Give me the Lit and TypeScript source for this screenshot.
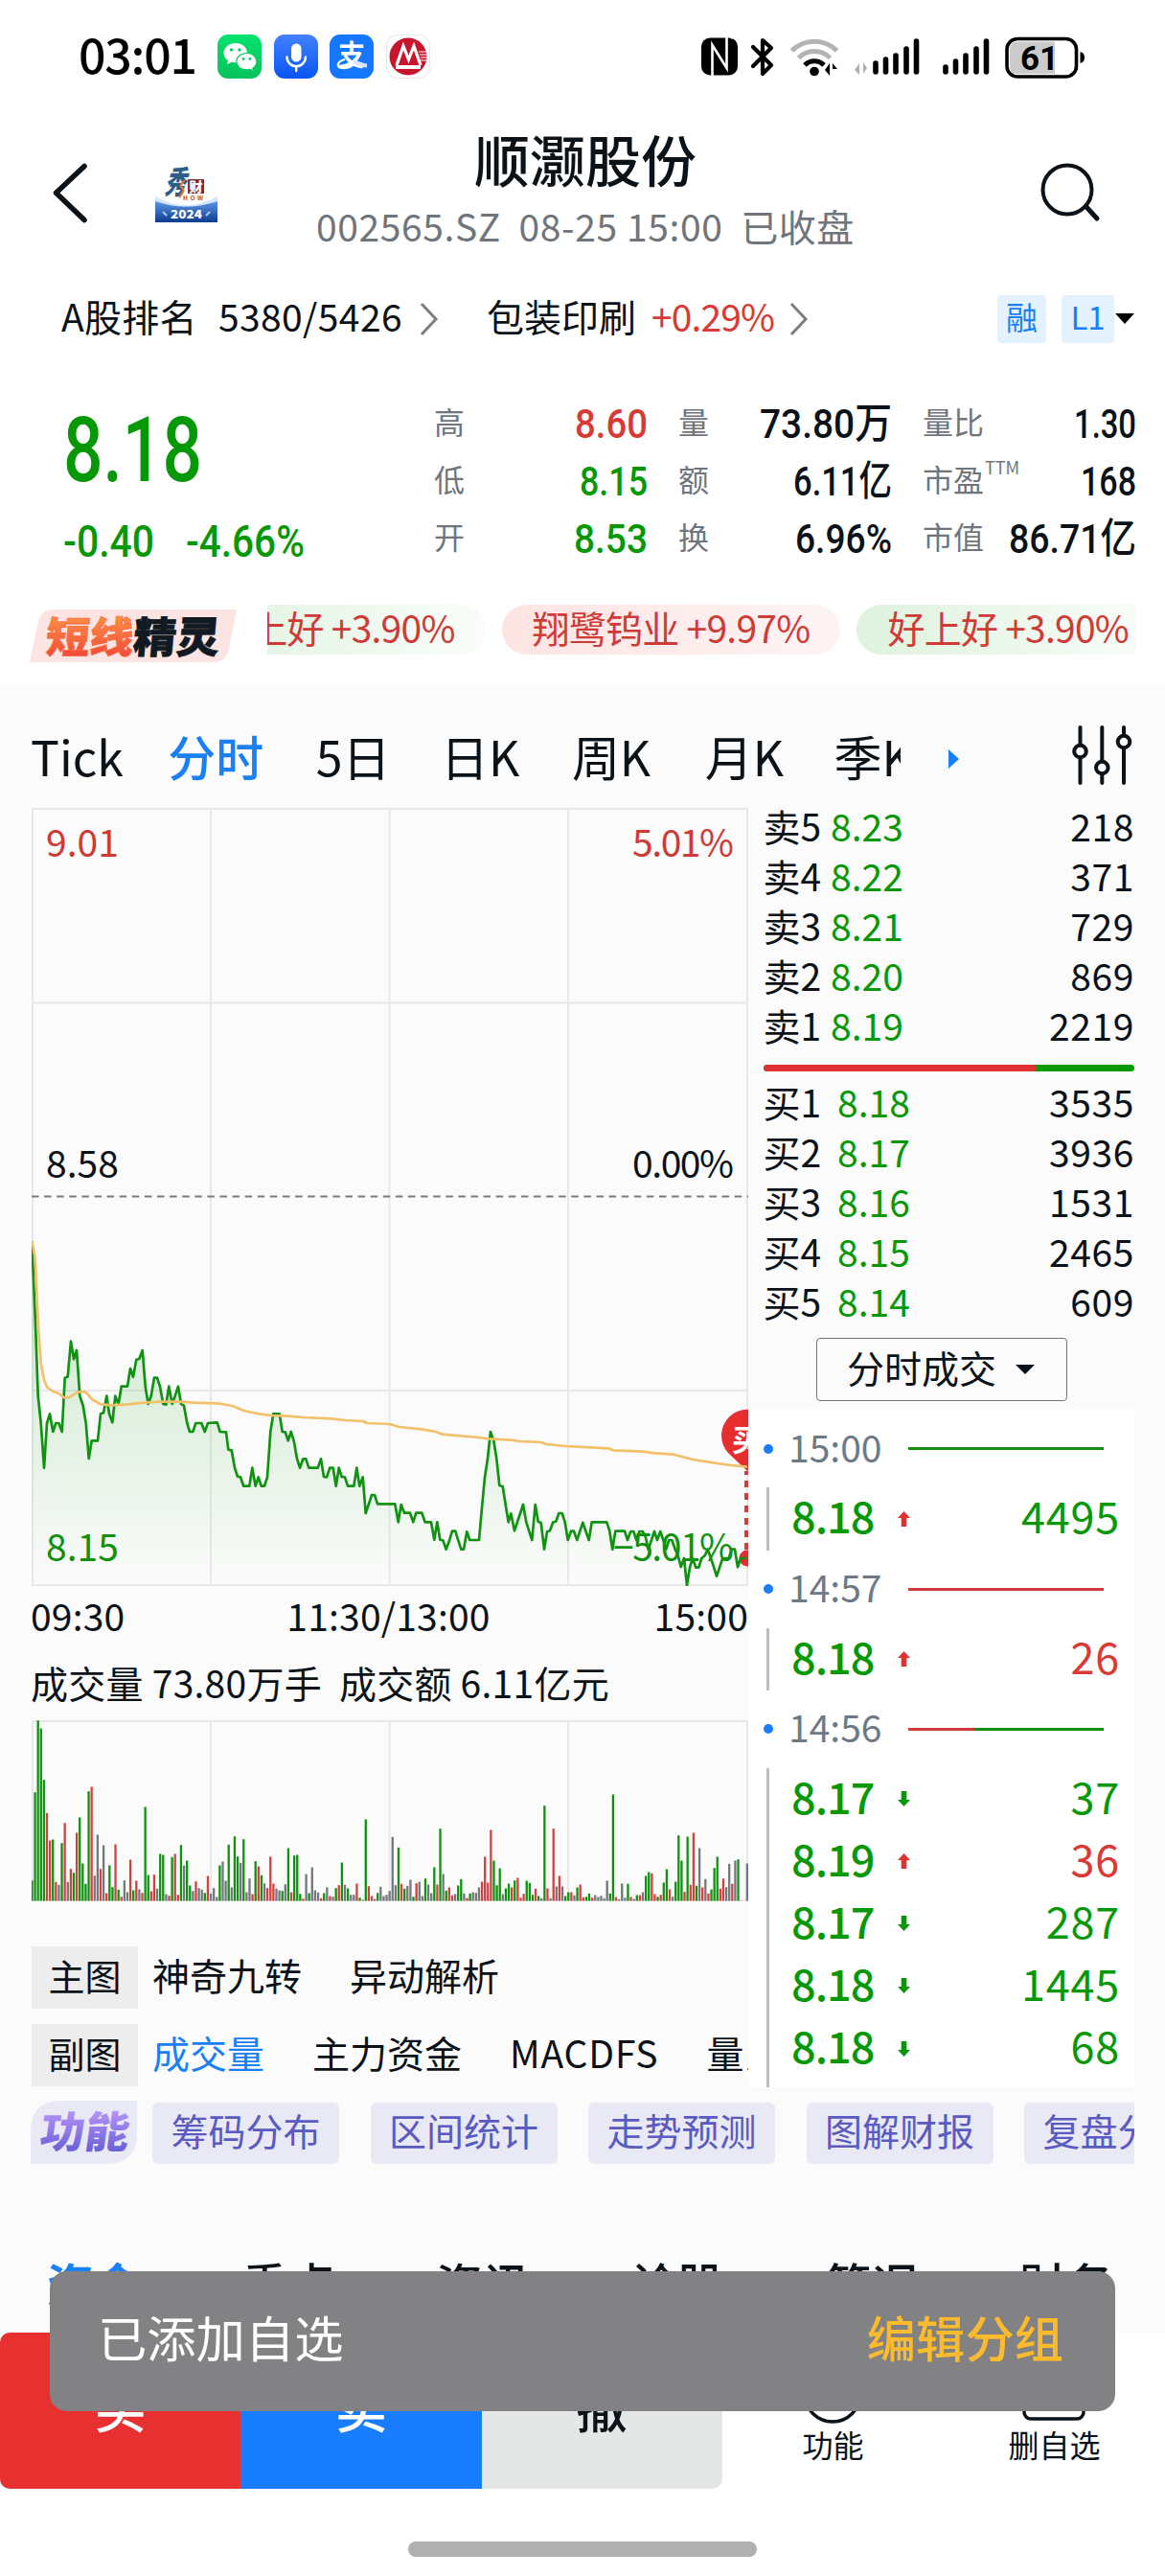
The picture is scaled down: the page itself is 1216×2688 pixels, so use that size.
import { LitElement, html, svg, css } from "lit";
import { customElement } from "lit/decorators.js";
import { classMap } from "lit/directives/class-map.js";

/* ---------- data ---------- */

const PRICE =
  "100,165 110,400 119,650 128,735 138,875 147,735 156,706 166,762 175,735 184,735 194,762 203,593 212,590 222,479 231,535 240,507 250,650 260,680 269,735 278,846 287,790 306,790 315,706 324,703 334,650 342,706 352,733 361,650 371,675 380,620 399,620 408,564 417,590 427,536 436,534 446,507 455,620 464,675 473,650 483,593 492,593 501,620 511,675 520,677 529,620 539,675 548,650 558,620 567,675 576,680 586,735 594,762 604,762 613,735 631,735 641,762 651,735 680,733 689,762 708,763 715,818 725,820 735,875 744,902 753,904 763,932 781,932 790,875 800,932 809,904 818,932 828,932 837,904 847,762 856,706 875,706 884,762 893,763 902,790 911,762 920,790 930,846 939,875 949,847 958,847 967,875 995,875 1005,847 1014,903 1023,904 1033,875 1043,875 1052,932 1061,875 1070,903 1080,904 1089,932 1108,932 1117,875 1126,932 1136,904 1145,1017 1155,988 1164,960 1173,960 1182,988 1237,988 1247,1045 1256,990 1266,1016 1284,1016 1294,1045 1303,1016 1321,1016 1331,1045 1350,1045 1360,1100 1369,1045 1378,1100 1387,1102 1397,1130 1408,1100 1416,1073 1426,1073 1435,1102 1444,1130 1452,1130 1462,1075 1471,1101 1500,1101 1508,1010 1518,905 1527,846 1536,762 1546,790 1555,846 1564,930 1574,933 1583,990 1592,1045 1600,1018 1611,1072 1620,1045 1638,990 1648,1045 1666,1101 1676,990 1685,1043 1694,1047 1704,1130 1713,1075 1722,1072 1732,1045 1741,1043 1750,1017 1760,1017 1769,1045 1778,1101 1788,1073 1797,1073 1807,1101 1825,1046 1844,1101 1853,1045 1900,1045 1909,1073 1918,1130 1927,1073 1956,1073 1965,1101 1975,1074 1984,1074 1993,1101 2002,1074 2012,1074 2021,1090 2030,1130 2040,1101 2049,1074 2058,1101 2068,1074 2077,1101 2086,1130 2095,1101 2104,1101 2114,1130 2123,1150 2132,1185 2142,1158 2151,1243 2160,1187 2169,1158 2179,1187 2188,1187 2197,1158 2207,1150 2216,1130 2226,1158 2235,1185 2244,1214 2254,1185 2263,1158 2282,1158 2291,1130 2301,1130 2310,1186 2319,1158 2340,1158";

const AVERAGE =
  "100,165 104,185 110,220 119,420 128,550 138,600 147,622 166,636 184,642 200,655 215,655 240,640 255,636 268,638 290,662 315,676 350,679 400,676 450,671 500,668 560,668 610,671 690,674 730,682 765,697 810,706 850,711 900,713 950,717 1040,721 1080,726 1138,729 1148,735 1220,738 1250,747 1320,754 1365,762 1385,770 1500,780 1530,784 1600,788 1630,792 1695,795 1710,801 1770,807 1905,814 1920,820 2010,824 2050,829 2110,833 2170,849 2220,857 2245,861 2290,867 2340,872";

/* One entry per minute: colour key and bar top. */
const VOLUME =
  "g726 g450 g225 g250 g411 r515 r601 g598 r731 k740 g609 r546 k731 r690 g702 r577 g529 g673 g737 g447 r433 k711 k583 r690 k616 r766 g679 g747 r613 g755 r777 k726 k763 r661 g757 r727 k754 r765 g496 g709 r760 r708 k752 g643 g646 k769 r774 g653 r643 r771 g615 k679 g664 g742 k759 r729 k750 k755 g765 r712 k767 k750 k778 g679 k667 k727 g614 k748 g588 g651 k671 g597 k763 k720 r769 g666 r682 g710 k735 r750 r652 r736 k752 k757 g759 k738 g625 r763 g648 g646 g768 r783 k706 g766 k685 k757 k764 r782 g766 k748 r775 k777 g750 r741 g670 k740 g751 k771 k771 r736 g780 r787 g535 r744 r775 k784 g765 k746 k775 k771 k759 k590 k741 g623 r737 g752 k743 k724 g777 r735 k730 k775 g720 k739 k766 g685 r739 g564 k706 g758 r748 r773 k769 g742 g722 k767 r781 g767 k763 k765 k748 r730 r652 r733 r568 g664 g741 g688 k769 g751 g736 r748 g726 r718 r780 r768 g727 g734 g771 r752 g775 k782 g492 r751 k782 r564 k745 r712 k745 g775 g763 r763 k773 g748 r739 r779 g777 g767 r780 k772 k778 k774 k782 k727 g767 g457 r778 k785 k736 k780 g737 r778 k784 g772 r772 k763 g712 g700 r704 r769 g777 r771 g733 g691 r754 k777 g730 g585 g664 r762 g589 r740 r577 g743 k625 r748 k722 r767 g754 g687 g652 r752 r720 k747 k674 r737 k664 g660 r789 k790 k673";

const COLORS: Record<string, string> = { g: "#0f920f", r: "#d63f3f", k: "#73787c" };

const toPoints = (s: string) =>
  s.split(" ").map((p) => {
    const [x, y] = p.split(",").map(Number);
    return [x / 3 - 33, y / 3 + 397] as [number, number];
  });
const join = (pts: [number, number][]) => pts.map(([x, y]) => `${x.toFixed(1)},${y.toFixed(1)}`).join(" ");
const pricePts = toPoints(PRICE);
const priceLine = join(pricePts);
const priceArea = `0.3,810.5 ${priceLine} 747,810.5`;
const averageLine = join(toPoints(AVERAGE));

/* Numeral text squeezed to an exact advance width; the box is one cap height tall. */
const fit = (text: string, width: number, size: number, cls = "") => html`
  <svg class="fit ${cls}" width=${width} height=${Math.round(size * 0.711)}>
    <text x="0" y=${Math.round(size * 0.711)} font-size=${size} textLength=${width} lengthAdjust="spacingAndGlyphs">${text}</text>
  </svg>`;

const tokens = css`
  :host {
    display: block;
    box-sizing: border-box;
    font-family: "Noto Sans CJK SC", "Noto Sans", sans-serif;
    color: #0b1218;
    font-size: 39px;
    white-space: nowrap;
  }
  * { box-sizing: border-box; }
  svg { display: block; flex: none; }
  .fit { overflow: visible; font-family: Roboto, "Noto Sans CJK SC", sans-serif; font-weight: 500; fill: currentColor; }
  .red { color: #d93a36; }
  .green { color: #079807; }
  .blue { color: #1a80f5; }
`;

/* ---------- status bar ---------- */

@customElement("status-bar")
class StatusBar extends LitElement {
  static styles = [
    tokens,
    css`
      :host { height: 118px; }
      .bar { display: flex; align-items: center; height: 118px; padding-left: 82px; color: #000; }
      .time { font-size: 50px; font-weight: 500; line-height: 60px; width: 145px; margin-top: -9px; letter-spacing: -1.2px; }
      .apps { display: flex; gap: 12.6px; }
      .sys { display: flex; align-items: center; margin-left: 283px; }
      .ali { font: 700 30px "Noto Sans CJK SC", sans-serif; }
      .lvl { font: 700 35px Roboto, sans-serif; }
    `,
  ];
  render() {
    return html`<div class="bar">
      <div class="time">03:01</div>
      <div class="apps">
        <svg width="46" height="46" viewBox="0 0 46 46">
          <defs><linearGradient id="w" x2="0" y2="1"><stop stop-color="#04e36d"/><stop offset="1" stop-color="#06c25c"/></linearGradient></defs>
          <rect width="46" height="46" rx="11" fill="url(#w)"/>
          <path d="M19 9C12 9 6.500 13.500 6.500 19.300c0 3.200 1.700 6 4.500 8L10 31l4.600-2.300c1.400.4 2.900.6 4.400.6 7 0 12-4.500 12-10S26 9 19 9z" fill="#fff"/>
          <path d="M30.500 19.500c-6 0-10.700 3.900-10.700 8.700s4.700 8.700 10.700 8.700c1.200 0 2.400-.2 3.500-.5l3.600 1.800-.8-3c2.400-1.600 4-4.100 4-7 0-4.800-4.400-8.700-10.300-8.700z" fill="#fff" stroke="#07cf63" stroke-width="1.200"/>
          <g fill="#07cf63"><circle cx="14.500" cy="16" r="1.700"/><circle cx="23" cy="16" r="1.700"/><circle cx="27" cy="25.500" r="1.400"/><circle cx="34" cy="25.500" r="1.400"/></g>
        </svg>
        <svg width="46" height="46" viewBox="0 0 46 46">
          <defs><linearGradient id="m" x2="0" y2="1"><stop stop-color="#4381fd"/><stop offset="1" stop-color="#0855f2"/></linearGradient></defs>
          <rect width="46" height="46" rx="11" fill="url(#m)"/>
          <rect x="18" y="9.500" width="10.500" height="19" rx="5.200" fill="#fff"/>
          <path d="M13.500 23.500a9.700 9.700 0 0 0 19.400 0M23.200 33v5" fill="none" stroke="#fff" stroke-width="2.400" stroke-linecap="round"/>
        </svg>
        <svg width="46" height="46" viewBox="0 0 46 46">
          <rect width="46" height="46" rx="11" fill="#1577fe"/>
          <text class="ali" x="9" y="32" font-size="28" textLength="28" lengthAdjust="spacingAndGlyphs" fill="#fff">支</text>
          <path d="M16 26c-8 2-10 8-3 9 6 .5 11-2 14-6" stroke="#fff" stroke-width="2.200" fill="none"/>
          <path d="M25 28c5 2 9 4 14 4.500" stroke="#d5e6ff" stroke-width="4" fill="none"/>
        </svg>
        <svg width="46" height="46" viewBox="0 0 46 46">
          <rect x=".5" y=".5" width="45" height="45" rx="11" fill="#fff" stroke="#e6e6e6"/>
          <circle cx="23" cy="23" r="19.500" fill="#c8152d"/>
          <path d="M34 18h10M35 21h9M36 24h8M36 27h8" stroke="#fff" stroke-width="1.100"/>
          <path d="M11 32 18 12l5.500 14L29 12l7 20" stroke="#fff" stroke-width="3.200" fill="none" stroke-linejoin="miter"/>
          <path d="M10 34h26" stroke="#fff" stroke-width="4"/>
        </svg>
      </div>
      <div class="sys">
        <svg width="401" height="46" viewBox="733 36 401 46">
          <rect x="733" y="39.500" width="38" height="39" rx="9"/>
          <path d="M744.500 80V47L759.500 71V38" fill="none" stroke="#fff" stroke-width="2.600"/>
          <path d="M739 78l-1 2M764 40l2-1" fill="none" stroke="#fff" stroke-width="2"/>
          <path d="M787 49l19 19-9 9V42l9 8-19 19" fill="none" stroke="#000" stroke-width="4.200" stroke-linejoin="round" stroke-linecap="round"/>
          <g fill="none" stroke-width="5" stroke-linecap="butt">
            <path d="M827.500 53a33 33 0 0 1 47 0" stroke="#b3b3b3"/>
            <path d="M834.500 60.500a23 23 0 0 1 33 0" stroke="#b3b3b3"/>
            <path d="M841 68a14 14 0 0 1 20 0" stroke="#000"/>
          </g>
          <circle cx="851" cy="74.500" r="4.800"/>
          <path d="M867 66v13l-5-6zM870 66l5 6h-5v7z"/>
          <path d="M898 66v12l-5-5zM902 65l4 6-4 6z" fill="#b0b0b0"/>
          <g stroke="#000" stroke-width="5.600" stroke-linecap="round">
            <path d="M915 66v9M925.500 62v13M936 58v17M947 51v24M957.500 43v32"/>
            <path d="M988 70v5M998.500 64v11M1009 58v17M1020 51v24M1030.500 43v32"/>
          </g>
          <rect x="1052" y="40.500" width="72.500" height="39.500" rx="11" fill="#fff" stroke="#000" stroke-width="3.600"/>
          <path d="M1062 43.500h40v33.500h-40q-7 0-7-8v-17q0-8.500 7-8.500z" fill="#cbcbcb"/>
          <path d="M1128.500 54q4.500 1 4.500 6t-4.500 6z"/>
          <text class="lvl" x="1066" y="73" textLength="40" lengthAdjust="spacingAndGlyphs">61</text>
        </svg>
      </div>
    </div>`;
  }
}

/* ---------- title, ranking, quote ---------- */

const chevron = html`<svg width="20" height="36" viewBox="0 0 20 36"><path d="M2 2l15 16L2 34" fill="none" stroke="#7b7f83" stroke-width="3"/></svg>`;

@customElement("stock-header")
class StockHeader extends LitElement {
  static styles = [
    tokens,
    css`
      .head { display: grid; grid-template-columns: 290px 642px 1fr; height: 152px; }
      .left { display: flex; align-items: center; padding: 14px 0 0 53px; gap: 68px; }
      .mid { text-align: center; padding-top: 12px; line-height: 70px; }
      .name { font-size: 58px; font-weight: 500; }
      .sub { color: #70757b; white-space: pre; letter-spacing: 0.6px; }
      .right { display: flex; align-items: center; justify-content: flex-end; padding: 12px 67px 0 0; }
      .rank { display: flex; align-items: center; height: 118px; line-height: 50px; padding-left: 64px; }
      .rank svg { position: relative; top: 4px; }
      .rank .n0 { letter-spacing: 0.3px; }
      .rank .n1 { margin: 0 18px 0 22px; letter-spacing: 0.4px; }
      .rank .ind { margin-left: 50px; }
      .rank .pct { margin: 0 16px 0 16px; letter-spacing: -0.9px; }
      .tags { display: flex; align-items: center; margin-left: auto; padding-right: 32px; }
      .tag { background: #e4f1fe; border-radius: 4px; height: 50px; line-height: 45px; font-size: 33px; text-align: center; width: 51px; margin-top: 7px; }
      .tag + .tag { width: 55px; margin-left: 16px; }
      .tags svg { margin-left: 1px; }
      .b1 { font-family: "Noto Sans CJK SC", sans-serif; font-weight: 900; }
    `,
  ];
  render() {
    return html`
      <div class="head">
        <div class="left">
          <svg width="41" height="64" viewBox="53 169 41 64"><path d="M88 173.500 58.500 201.200 88 229.500" fill="none" stroke="#0b1218" stroke-width="5.500" stroke-linecap="round" stroke-linejoin="round"/></svg>
          <svg width="65" height="61" viewBox="0 0 65 61">
            <defs><linearGradient id="s" x2="0" y2="1"><stop stop-color="#5c96e6"/><stop offset="1" stop-color="#0d3b8e"/></linearGradient></defs>
            <path d="M0 34q32 18 65 0v10H0z" fill="#d4e6fa"/>
            <path d="M0 39q32 11 65 0v22H0z" fill="url(#s)"/>
            <g transform="skewX(-16)"><text class="b1" x="18" y="31" font-size="33" textLength="22" lengthAdjust="spacingAndGlyphs" fill="#2c5c88">秀</text></g>
            <path d="M31 17q-7 6-3 8t-3 10" fill="none" stroke="#dc7838" stroke-width="2.200"/>
            <rect x="34" y="16" width="17" height="15" fill="#7e2c2e"/>
            <text class="b1" x="35.500" y="28.500" font-size="14" fill="#fff">财</text>
            <text class="b1" x="29" y="38" font-size="6.500" textLength="21" fill="#c8663a">HOW</text>
            <text class="b1" x="16" y="56.500" font-size="12" textLength="33" lengthAdjust="spacingAndGlyphs" fill="#fff">2024</text>
            <path d="M8 50l4 4M53 54l4-4" stroke="#a8c8f4" stroke-width="2"/>
          </svg>
        </div>
        <div class="mid">
          <div class="name">顺灏股份</div>
          <div class="sub">002565.SZ  08-25 15:00  已收盘</div>
        </div>
        <div class="right">
          <svg width="64" height="64" viewBox="1087 168 64 64"><circle cx="1116" cy="198" r="25.500" fill="none" stroke="#0b1218" stroke-width="4"/><path d="M1136 216l11 12" stroke="#0b1218" stroke-width="5" stroke-linecap="round"/></svg>
        </div>
      </div>
      <div class="rank">
        <span class="n0">A股排名</span><span class="n1">5380/5426</span>${chevron}
        <span class="ind">包装印刷</span><span class="pct red">+0.29%</span>${chevron}
        <div class="tags">
          <span class="tag blue">融</span><span class="tag blue">L1</span>
          <svg width="20" height="12" viewBox="0 0 20 12"><path d="M0 0h20L10 11z"/></svg>
        </div>
      </div>`;
  }
}

const STATS: [string, string, number, string][] = [
  ["高", "8.60", 76, "red"], ["量", "73.80万", 138, ""], ["量比", "1.30", 65, ""],
  ["低", "8.15", 71, "green"], ["额", "6.11亿", 103, ""], ["市盈", "168", 58, ""],
  ["开", "8.53", 77, "green"], ["换", "6.96%", 101, ""], ["市值", "86.71亿", 133, ""],
];

@customElement("stock-quote")
class StockQuote extends LitElement {
  static styles = [
    tokens,
    css`
      .quote { display: flex; height: 243px; padding-top: 23px; }
      .main { width: 455px; padding: 24px 0 0 66px; }
      .delta { display: flex; gap: 33px; margin-top: 46px; }
      .stats { display: grid; grid-template-columns: repeat(3, 221px); column-gap: 34px; grid-auto-rows: 60px; }
      .cell { display: flex; align-items: center; justify-content: space-between; }
      .key { font-size: 32px; color: #70757b; margin: -5px 0 0 -2px; line-height: 40px; display: flex; }
      .ttm { font: 18px/18px "Noto Sans CJK SC", sans-serif; padding-left: 1px; margin-top: -1px; }
      .flash { display: flex; height: 82px; padding-left: 31px; }
      .badge { width: 216px; margin-top: 5px; }
      .hot { font: 900 44px "Noto Sans CJK SC", sans-serif; }
      .marquee { display: flex; gap: 17px; margin-left: 32px; width: 906px; height: 52px; overflow: hidden; }
      .chip { flex: none; height: 52px; line-height: 47px; padding: 0 32px; border-radius: 26px; color: #cf3b36; background: linear-gradient(90deg, #fde4e3, #fef4f4); letter-spacing: -0.75px; }
      .chip.down { background: linear-gradient(90deg, #def2de, #fafdfa); }
      .chip:first-child { margin-left: -88px; }
    `,
  ];
  render() {
    return html`
      <div class="quote">
        <div class="main green">
          ${fit("8.18", 145, 94)}
          <div class="delta">${fit("-0.40", 95, 46)}${fit("-4.66%", 124, 46)}</div>
        </div>
        <div class="stats">
          ${STATS.map(([k, v, w, c]) => html`<div class="cell">
            <span class="key">${k}${k === "市盈" ? html`<span class="ttm">TTM</span>` : ""}</span>${fit(v, w, 43, c)}
          </div>`)}
        </div>
      </div>
      <div class="flash">
        <svg class="badge" height="55" viewBox="0 0 216 55">
          <defs><linearGradient id="f" x2="0" y2="1"><stop offset=".2" stop-color="#fb9143"/><stop offset="1" stop-color="#f23a38"/></linearGradient></defs>
          <path d="M24 0h192l-8 41q-3 14-16 14H0L9 12Q12 0 24 0z" fill="#fce4e3"/>
          <g transform="translate(12 0) skewX(-5)">
            <text class="hot" x="8" y="45" textLength="91" lengthAdjust="spacingAndGlyphs" fill="url(#f)" stroke="#f8693e" stroke-width=".8">短线</text>
            <text class="hot" x="99" y="45" textLength="90" lengthAdjust="spacingAndGlyphs" fill="#111a22" stroke="#111a22" stroke-width=".8">精灵</text>
          </g>
        </svg>
        <div class="marquee">
          <div class="chip down">好上好 +3.90%</div>
          <div class="chip">翔鹭钨业 +9.97%</div>
          <div class="chip down">好上好 +3.90%</div>
        </div>
      </div>`;
  }
}

/* ---------- charts ---------- */

const GRID_X = [1, 187, 373.500, 560, 747];

@customElement("trend-panel")
class TrendPanel extends LitElement {
  static styles = [
    tokens,
    css`
      :host { width: 748px; overflow: hidden; }
      .lbl { font: 39px "Noto Sans CJK SC", sans-serif; }
      .pin { font: 700 31px "Noto Sans CJK SC", sans-serif; }
      .axis { display: flex; justify-content: space-between; height: 60px; line-height: 60px; letter-spacing: 0.2px; margin-left: -1px; }
      .axis .noon { padding-right: 2px; }
      .vol { height: 80px; line-height: 80px; white-space: pre; letter-spacing: 0.25px; margin-left: -1px; }
      .rows { display: grid; gap: 16px; margin-top: 46px; }
      .row { display: flex; height: 65px; line-height: 59px; gap: 50px; overflow: hidden; }
      .tag { background: #ededed; width: 111px; flex: none; text-align: center; margin-right: -35px; font-size: 38px; }
      .row span { flex: none; }
      .row .latin { letter-spacing: 0.8px; }
    `,
  ];
  render() {
    return html`
      <svg width="748" height="812">
        <defs><linearGradient id="a" x2="0" y2="1"><stop stop-color="#0a960a" stop-opacity=".2"/><stop offset=".6" stop-color="#0a960a" stop-opacity=".09"/><stop offset="1" stop-color="#0a960a" stop-opacity="0"/></linearGradient></defs>
        <g stroke="#e9e9e9" stroke-width="2">
          ${GRID_X.map((x) => svg`<path d="M${x} 0V811"/>`)}
          <path d="M0 1H748M0 203.500H748M0 608H748M0 811H748"/>
        </g>
        <path d="M0 405.500H748" stroke="#767b80" stroke-width="2" stroke-dasharray="7.500 5.600"/>
        <polygon points=${priceArea} fill="url(#a)"/>
        <g class="lbl">
          <text x="15" y="51" fill="#d03a36">9.01</text>
          <text x="733" y="51" fill="#d03a36" text-anchor="end" textLength="106">5.01%</text>
          <text x="15" y="386" fill="#0b1218">8.58</text>
          <text x="733" y="386" fill="#0b1218" text-anchor="end" textLength="106">0.00%</text>
          <text x="15" y="786" fill="#12900f">8.15</text>
        </g>
        <path d="M746 692V782" stroke="#d83a3a" stroke-width="4" stroke-dasharray="7 6" stroke-dashoffset="3"/>
        <circle cx="747" cy="783" r="8.500" fill="#e23030"/>
        <path d="M747 692 727 673A27 27 0 1 1 767 673z" fill="#e62e2e"/>
        <text class="pin" x="731" y="671" fill="#fff">买</text>
        <polyline points=${priceLine} fill="none" stroke="#109212" stroke-width="2.700" stroke-linejoin="round"/>
        <polyline points=${averageLine} fill="none" stroke="#f2c069" stroke-width="2.700" stroke-linejoin="round"/>
        <text class="lbl" x="607" y="786" fill="#12900f" textLength="126">−5.01%</text>
      </svg>
      <div class="axis"><span>09:30</span><span class="noon">11:30/13:00</span><span>15:00</span></div>
      <div class="vol">成交量 73.80万手  成交额 6.11亿元</div>
      <svg width="748" height="190">
        <g stroke="#e9e9e9" stroke-width="2">
          ${GRID_X.map((x) => svg`<path d="M${x} 1V189"/>`)}
          <path d="M0 1H748M0 188H748"/>
        </g>
        ${VOLUME.split(" ").map((v, i) => {
          const h = (790 - Number(v.slice(1))) / 3;
          return svg`<rect x=${(i * 3.11 - 0.7).toFixed(2)} y=${(188.500 - h).toFixed(1)} width="2.300" height=${h.toFixed(1)} fill=${COLORS[v[0]]}/>`;
        })}
      </svg>
      <div class="rows">
        <div class="row"><span class="tag">主图</span><span>神奇九转</span><span>异动解析</span></div>
        <div class="row"><span class="tag">副图</span><span class="blue">成交量</span><span>主力资金</span><span class="latin">MACDFS</span><span>量比</span></div>
      </div>`;
  }
}

/* ---------- order book ---------- */

const ASKS = [["卖5", "8.23", "218"], ["卖4", "8.22", "371"], ["卖3", "8.21", "729"], ["卖2", "8.20", "869"], ["卖1", "8.19", "2219"]];
const BIDS = [["买1", "8.18", "3535"], ["买2", "8.17", "3936"], ["买3", "8.16", "1531"], ["买4", "8.15", "2465"], ["买5", "8.14", "609"]];
const TICKS = [
  { time: "15:00", buy: 0, rows: [["8.18", "up", "4495", "green"]] },
  { time: "14:57", buy: 100, rows: [["8.18", "up", "26", "red"]] },
  { time: "14:56", buy: 34, rows: [["8.17", "down", "37", "green"], ["8.19", "up", "36", "red"], ["8.17", "down", "287", "green"], ["8.18", "down", "1445", "green"], ["8.18", "down", "68", "green"]] },
];

@customElement("order-book")
class OrderBook extends LitElement {
  static styles = [
    tokens,
    css`
      :host { width: 403px; }
      .level { display: flex; height: 52.1px; line-height: 52px; padding-left: 15.500px; }
      .lv { width: 70.500px; }
      .bid .lv { width: 77.500px; }
      .level .qty { margin-left: auto; letter-spacing: 0.6px; }
      .asks { margin-top: -8px; }
      .ratio { display: flex; height: 7px; border-radius: 4px; overflow: hidden; margin: 15.500px 0 5px 16px; background: #079807; }
      .ratio div { width: 285px; background: #e03232; border-radius: 4px; }
      .drop { display: flex; align-items: center; justify-content: center; gap: 20px; width: 262px; height: 66px; margin: 13px 0 9px 71px; border: 1.500px solid #6f7478; border-radius: 4px; line-height: 50px; padding: 0 2px 7px 0; }
      .drop svg { position: relative; top: 3px; }
      .ticks { background: #fff; height: 707px; overflow: hidden; }
      .when { display: flex; align-items: center; height: 81px; padding-left: 16px; color: #6e7987; }
      .dot { width: 10px; height: 10px; border-radius: 50%; background: #1a7dfa; margin-right: 16px; }
      .clock { line-height: 50px; margin-top: -6px; width: 125px; }
      .flow { display: flex; width: 204px; height: 3px; background: #12900f; }
      .sold { background: #d03a3a; }
      .rows { border-left: 3.500px solid #bdbdbd; margin-left: 19px; padding-right: 15px; }
      .rows.open { padding-bottom: 10px; }
      .tick { display: flex; align-items: center; height: 65.1px; line-height: 57px; font-size: 45px; padding: 0 0 8px 23px; }
      .tick .p { font-weight: 500; width: 111px; letter-spacing: -1px; }
      .tick .qty { margin-left: auto; letter-spacing: 0.8px; }
      .tick svg { position: relative; top: 4px; }
    `,
  ];
  level(r: string[], bid: boolean) {
    return html`<div class=${classMap({ level: true, bid })}><span class="lv">${r[0]}</span><span class="green">${r[1]}</span><span class="qty">${r[2]}</span></div>`;
  }
  render() {
    return html`
      <div class="asks">${ASKS.map((r) => this.level(r, false))}</div>
      <div class="ratio"><div></div></div>
      <div>${BIDS.map((r) => this.level(r, true))}</div>
      <div class="drop">分时成交<svg width="20" height="10"><path d="M0 0h20L10 10z" fill="#0b1218"/></svg></div>
      <div class="ticks">
        ${TICKS.map((g) => html`
          <div class="when"><span class="dot"></span><span class="clock">${g.time}</span>
            <div class="flow"><div class="sold" style="width:${g.buy}%"></div></div></div>
          <div class=${classMap({ rows: true, open: g.rows.length > 1 })}>
            ${g.rows.map(([p, d, q, c]) => html`<div class="tick"><span class="p green">${p}</span>
              <svg width="13" height="16" viewBox="0 0 13 16">${d === "up"
                ? svg`<path d="M6.500 0 13 7H9.300V16H3.700V7H0z" fill="#e03232"/>`
                : svg`<path d="M6.500 16 13 9H9.300V0H3.700V9H0z" fill="#079807"/>`}</svg>
              <span class="qty ${c}">${q}</span></div>`)}
          </div>`)}
      </div>`;
  }
}

/* ---------- page ---------- */

@customElement("app-root")
class AppRoot extends LitElement {
  static styles = [
    tokens,
    css`
      :host { position: relative; width: 1216px; height: 2688px; background: #fff; overflow: hidden; }
      .body { background: #fbfbfb; height: 1721px; padding-top: 20px; }
      .tabs { display: flex; align-items: center; height: 110px; padding-left: 32px; }
      .periods { display: flex; width: 908px; overflow: hidden; font-size: 50px; line-height: 70px; gap: 52.500px; }
      .periods span { flex: none; }
      .periods .on { font-weight: 500; color: #1a80f5; margin: 0 2px 0 -6px; }
      .periods span:nth-child(5) { margin: 0 4px 0 2px; }
      .more { margin: 7px 117px 0 50px; }
      .cols { display: flex; padding-left: 33px; height: 1335px; }
      .tools { display: flex; gap: 32.500px; align-items: flex-end; margin: 14px 32px 0 32px; height: 66px; overflow: hidden; }
      .tools .chip { flex: none; width: 195px; height: 64px; line-height: 56px; border-radius: 6px; background: #e9e9f6; color: #5a5ac0; text-align: center; }
      .tools svg { margin-right: -16.500px; }
      .fn { font: 900 45px "Noto Sans CJK SC", sans-serif; }
      .deep { display: flex; margin: 89px 0 0 49px; font-size: 49px; font-weight: 500; line-height: 70px; height: 87px; overflow: hidden; }
      .deep span { width: 203px; flex: none; }
      .deep .on { font-weight: 700; color: #1a80f5; }
      .trade { display: flex; height: 163px; }
      .btn { width: 251.300px; color: #fff; font-size: 54px; font-weight: 500; text-align: center; line-height: 154px; }
      .buy { background: #e83030; border-radius: 10px 0 0 10px; }
      .sell { background: #187eff; }
      .undo { background: #e5e7e6; color: #0b1218; border-radius: 0 10px 10px 0; }
      .act { display: flex; flex-direction: column; align-items: center; width: 231px; font-size: 32px; line-height: 44px; padding-top: 36px; }
      .act svg { margin-bottom: -2px; }
      .home { width: 364px; height: 16px; border-radius: 8px; background: #b0b0b0; margin: 55px 0 0 426px; }
      .toast { position: absolute; left: 52px; top: 2370px; width: 1112px; height: 146px; border-radius: 18px; background: #828184; color: #fff; display: flex; justify-content: space-between; padding: 0 54px 0 50px; line-height: 136px; font-size: 51.300px; }
      .toast .edit { color: #fbbb2c; font-weight: 500; }
    `,
  ];
  render() {
    return html`
      <status-bar></status-bar>
      <stock-header></stock-header>
      <stock-quote></stock-quote>
      <div class="body">
        <div class="tabs">
          <div class="periods">
            ${["Tick", "分时", "5日", "日K", "周K", "月K", "季K"].map((t) => html`<span class=${classMap({ on: t === "分时" })}>${t}</span>`)}
          </div>
          <svg class="more" width="11" height="20"><path d="M0 0v20l11-10z" fill="#1a7dfa"/></svg>
          <svg width="64" height="64" viewBox="1118 759 64 64" fill="none" stroke="#0b1218" stroke-width="4" stroke-linecap="round">
            <path d="M1127.500 762v17M1127.500 795v25M1150.300 762v34M1150.300 812v8M1173 762v7M1173 785v35"/>
            <circle cx="1127.500" cy="787" r="6.300"/><circle cx="1150.300" cy="804" r="6.300"/><circle cx="1173" cy="777" r="6.300"/>
          </svg>
        </div>
        <div class="cols"><trend-panel></trend-panel><order-book></order-book></div>
        <div class="tools">
          <svg width="111" height="66">
            <defs><linearGradient id="t" x2="0" y2="1"><stop offset=".15" stop-color="#bb98f8"/><stop offset="1" stop-color="#5a55d2"/></linearGradient></defs>
            <path d="M32 0h79v34q0 32-32 32H0V32Q0 0 32 0z" fill="#e9e9f6"/>
            <g transform="skewX(-8)"><text class="fn" x="15" y="49" textLength="93" lengthAdjust="spacingAndGlyphs" fill="url(#t)">功能</text></g>
          </svg>
          ${["筹码分布", "区间统计", "走势预测", "图解财报", "复盘分析"].map((t) => html`<div class="chip">${t}</div>`)}
        </div>
        <div class="deep">
          ${["资金", "重点", "资讯", "诊股", "简况", "财务"].map((t, i) => html`<span class=${classMap({ on: i === 0 })}>${t}</span>`)}
        </div>
      </div>
      <div class="trade">
        <div class="btn buy">买</div><div class="btn sell">卖</div><div class="btn undo">撤</div>
        <div class="act">
          <svg width="62" height="60"><circle cx="31" cy="28" r="29" fill="none" stroke="#0b1218" stroke-width="3.500"/></svg>功能</div>
        <div class="act">
          <svg width="66" height="60"><rect x="2" y="2" width="62" height="52" rx="7" fill="none" stroke="#0b1218" stroke-width="3.500"/></svg>删自选</div>
      </div>
      <div class="home"></div>
      <div class="toast"><span>已添加自选</span><span class="edit">编辑分组</span></div>`;
  }
}
